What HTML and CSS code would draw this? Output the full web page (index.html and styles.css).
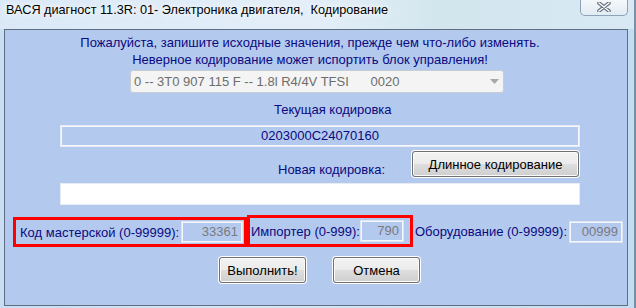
FILE: index.html
```html
<!DOCTYPE html>
<html lang="ru">
<head>
<meta charset="utf-8">
<title>Кодирование</title>
<link rel="stylesheet" href="styles.css">
</head>
<body>
<div class="window">
  <div class="titlebar">
    <span class="title">ВАСЯ диагност 11.3R: 01- Электроника двигателя,&nbsp; Кодирование</span>
    <div class="close">
      <svg width="14" height="10" viewBox="0 0 14 10"><path d="M2 1 L12 9 M12 1 L2 9" stroke="#5e6b7a" stroke-width="3.6" stroke-linecap="round"/><path d="M2 1 L12 9 M12 1 L2 9" stroke="#ffffff" stroke-width="1.6" stroke-linecap="round"/></svg>
    </div>
  </div>
  <div class="client">
    <div class="msg">Пожалуйста, запишите исходные значения, прежде чем что-либо изменять.</div>
    <div class="msg">Неверное кодирование может испортить блок управления!</div>
    <div class="combo">
      <span class="combo-text">0 -- 3T0 907 115 F -- 1.8l R4/4V TFSI      0020</span>
      <svg class="combo-arrow" width="9" height="5" viewBox="0 0 9 5"><path d="M0 0 H9 L4.5 5 Z" fill="#a8a8a8"/></svg>
    </div>
    <div class="cur-label">Текущая кодировка</div>
    <div class="code-box">0203000C24070160</div>
    <div class="new-row">
      <span class="new-label">Новая кодировка:</span>
      <button class="btn btn-long">Длинное кодирование</button>
    </div>
    <div class="new-input"></div>
    <div class="fields">
      <div class="hl hl-1"><span class="lbl">Код мастерской (0-99999):</span><div class="num num-1">33361</div></div>
      <div class="hl hl-2"><span class="lbl">Импортер (0-999):</span><div class="num num-2">790</div></div>
      <span class="lbl lbl-eq">Оборудование (0-99999):</span><div class="num num-3">00999</div>
    </div>
    <div class="actions">
      <button class="btn btn-act">Выполнить!</button>
      <button class="btn btn-act btn-cancel">Отмена</button>
    </div>
  </div>
</div>
</body>
</html>
```
FILE: styles.css
```css
* { box-sizing: border-box; }
html, body { margin: 0; padding: 0; }
body {
  width: 636px;
  height: 308px;
  overflow: hidden;
  font-family: "Liberation Sans", Arial, sans-serif;
  background: #c2daf1;
}
.window {
  width: 636px;
  height: 308px;
  display: flex;
  flex-direction: column;
  background: linear-gradient(to right, #c9def3 0%, #d6e7f6 40%, #cfe3f2 70%, #c6ddf1 100%);
  border-right: 2px solid #7890a8;
}
.titlebar {
  height: 29px;
  display: flex;
  align-items: flex-start;
  padding-left: 6px;
  padding-right: 6px;
  background: linear-gradient(to right, #dbe9f7 0%, #e3eef8 50%, #d2e6ee 70%, #d8e9f3 100%);
}
.title {
  margin-top: 3px;
  font-size: 12.7px;
  line-height: 15px;
  color: #000;
  text-shadow: 0 0 6px #fff, 0 0 10px #fff;
  white-space: nowrap;
}
.close {
  margin-left: auto;
  width: 48px;
  height: 16px;
  border: 1px solid #8ea2b8;
  border-top: none;
  border-radius: 0 0 5px 5px;
  background: linear-gradient(#f4f8fb, #e2ebf3);
  display: flex;
  justify-content: center;
  align-items: flex-start;
  padding-top: 2px;
}
.client {
  margin-left: 4px;
  width: 624px;
  height: 277px;
  border: 1px solid #5f6e80;
  background: #b4c9ee;
  color: #0a0a80;
  font-size: 13px;
}
.msg {
  width: 610px;
  height: 17px;
  line-height: 17px;
  text-align: center;
  white-space: nowrap;
}
.msg:first-child { margin-top: 4px; }
.combo {
  margin-top: 2px;
  margin-left: 125px;
  width: 374px;
  height: 23px;
  border: 1px solid #c9cdd3;
  border-radius: 3px;
  background: #f4f4f4;
  color: #6d6d6d;
  display: flex;
  align-items: center;
  padding-left: 3px;
  padding-right: 4px;
}
.combo-text { white-space: pre; }
.combo-arrow { margin-left: auto; }
.cur-label {
  margin-top: 9px;
  margin-left: 269px;
  height: 16px;
  line-height: 16px;
}
.code-box {
  margin-top: 7px;
  margin-left: 55px;
  width: 520px;
  height: 22px;
  border: 1px solid #e4eaf3;
  box-shadow: inset 0 0 0 1px #f7f9fc;
  text-align: center;
  line-height: 20px;
}
.new-row {
  margin-top: 4px;
  height: 26px;
  display: flex;
  align-items: flex-start;
}
.new-label {
  width: 407px;
  padding-left: 273px;
  margin-top: 11px;
  height: 16px;
  line-height: 16px;
  white-space: nowrap;
}
.btn {
  font-family: "Liberation Sans", Arial, sans-serif;
  font-size: 13px;
  color: #000;
  height: 26px;
  padding: 0;
  border: 1px solid #707070;
  border-radius: 3px;
  background: linear-gradient(#f3f3f3 0%, #ebebeb 48%, #dddddd 52%, #cfcfcf 100%);
  box-shadow: 0 0 0 1px #fdfdfd, inset 0 0 0 1px #fbfbfb;
}
.btn-long { width: 167px; }
.new-input {
  margin-top: 6px;
  margin-left: 55px;
  width: 520px;
  height: 22px;
  background: #fff;
  border: 1px solid #e8ecf2;
}
.fields {
  margin-top: 10px;
  height: 33px;
  display: flex;
  align-items: flex-start;
}
.hl {
  border: 3px solid #f00;
  display: flex;
  align-items: center;
}
.hl-1 {
  margin-left: 8px;
  margin-top: 2px;
  width: 234px;
  height: 30px;
  padding-left: 4px;
}
.hl-2 {
  width: 166px;
  height: 32px;
  padding-left: 1px;
}
.lbl { white-space: nowrap; }
.num {
  height: 22px;
  border: 1px solid #dfe5ee;
  box-shadow: inset 0 0 0 1px #f4f7fb;
  color: #7a7a80;
  text-align: right;
  line-height: 20px;
  padding-right: 4px;
}
.num-1 { width: 62px; margin-left: auto; margin-right: 1px; }
.num-2 { width: 45px; margin-left: auto; margin-right: 6px; }
.lbl-eq {
  margin-left: 2px;
  margin-top: 6px;
  height: 22px;
  line-height: 22px;
}
.num-3 { width: 54px; margin-left: auto; margin-right: 4px; margin-top: 6px; }
.actions {
  margin-top: 9px;
  display: flex;
  padding-left: 214px;
  gap: 27px;
}
.btn-act { width: 87px; }
```
